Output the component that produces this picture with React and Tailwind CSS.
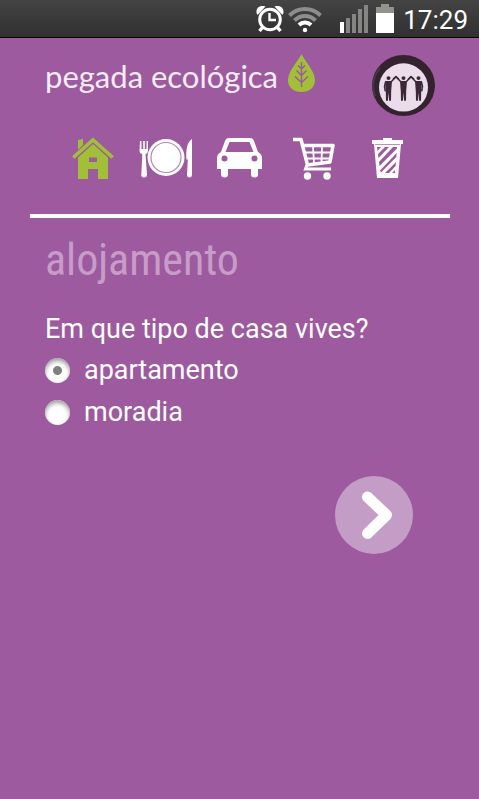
import { useState } from "react";

function StatusBar() {
  return (
    <div className="flex h-[38px] items-center justify-end border-b border-black bg-linear-to-b from-[#444444] to-[#303030] pr-[11px] text-white">
      <svg width="28" height="28" viewBox="0 0 28 28" fill="none" stroke="#fff" aria-label="alarme">
        <circle cx="14" cy="14.5" r="10.3" strokeWidth="3" />
        <path d="M13.5 8v7H20" strokeWidth="2.4" />
        <path d="M6.5 22.5 3.5 26M21.5 22.5l3 3.500" strokeWidth="3.4" />
        <path d="M1 9.500C-1 4 3 -.5 9.500 1.500L2 9.500zM27 9.500C29 4 25 -.5 18.500 1.500L26 9.500z" fill="#fff" stroke="none" />
      </svg>
      <svg className="ml-[4px]" width="34" height="28" viewBox="0 0 34 28" fill="none" aria-label="wifi">
        <path d="M1.500 10.500a21.500 21.500 0 0 1 31 0" stroke="#8d8e8c" strokeWidth="4" />
        <path d="M6.500 15.500a14.500 14.500 0 0 1 21 0" stroke="#8d8e8c" strokeWidth="4" />
        <path d="M11 20a8.500 8.500 0 0 1 12 0" stroke="#fff" strokeWidth="4" />
        <circle cx="17" cy="25" r="2.200" fill="#fff" />
      </svg>
      <svg className="ml-[18px]" width="28" height="28" viewBox="0 0 28 28" fill="#858683" aria-label="rede">
        <path fill="#fff" d="M0 17h4v11H0z" />
        <path d="M6 13h4v15H6zM12 9h4v19h-4zM18 4h4v24h-4zM24 0h4v28h-4z" />
      </svg>
      <svg className="ml-[8px]" width="18" height="29" viewBox="0 0 18 29" aria-label="bateria">
        <path fill="#92938f" d="M5 0h8v3h5v6H0V3h5z" />
        <path fill="#fff" d="M0 9h18v20H0z" />
      </svg>
      <span className="ml-[9px] pt-0.5 text-[26px] leading-[30px]">17:29</span>
    </div>
  );
}

function Leaf() {
  return (
    <svg width="27" height="38" viewBox="0 0 27 38" fill="none" aria-hidden="true">
      <path fill="#a2c037" d="M13.500 0C16 6 27 17 27 26c0 8-6 12-13.500 12S0 34 0 26C0 17 11 6 13.500 0z" />
      <path stroke="#9d5a9e" strokeWidth="1.500" d="M13.500 8v25M10 11.500l3.500 3.500 3.500-3.500M8.500 16.500l5 5 5-5M7 22.500l6.500 6 6.500-6" />
    </svg>
  );
}

function Person({ x, arms }) {
  return (
    <g transform={`translate(${x} 0)`} fill="#3b2836" stroke="#3b2836">
      <circle cx="0" cy="23.500" r="2" stroke="none" />
      <path stroke="none" d="M-3.500 26.500h7l-.8 10-.2 10H.6L0 38l-.6 8.500h-1.900L-2.700 37z" />
      <path d={arms} fill="none" strokeWidth="1.500" strokeLinejoin="round" />
    </g>
  );
}

function Badge() {
  return (
    <svg width="63" height="61" viewBox="0 0 63 62" preserveAspectRatio="none" aria-hidden="true">
      <ellipse cx="31.500" cy="31" rx="31.500" ry="31" fill="#35222f" />
      <path d="M3 42A31 30 0 0 1 8 13" fill="none" stroke="#433849" strokeWidth="2" />
      <circle cx="31.500" cy="33" r="24.500" fill="#eadcea" />
      <Person x={16.5} arms="M-3 27.500l-1 4.500.8 5M2.500 27.500l5-5.500 3 3" />
      <Person x={31.5} arms="M-2.500 27.500l-5-5.500-3 2.500M2.500 27.500l5-5.500 3 2.500" />
      <Person x={46.5} arms="M-2.500 27.500l-5-5.500-3 3M3 27.500l1 4.500-.8 5" />
    </svg>
  );
}

function HouseIcon() {
  return (
    <svg width="42" height="43" viewBox="0 0 42 43" aria-hidden="true">
      <path fill="#a2c037" d="M6 3l5-1v6l-5 5z" />
      <path fill="none" stroke="#a2c037" strokeWidth="3.600" d="M1.300 20.500 21 2.800l19.700 17.700" />
      <path fill="#a2c037" fillRule="evenodd" d="M21 7 36 20.500V42H26V32H16v10H6V20.500zM17 20.500V25h8v-4.500z" />
    </svg>
  );
}

function PlateIcon() {
  return (
    <svg width="54" height="42" viewBox="0 0 54 42" fill="#fff" aria-hidden="true">
      <path d="M1 4h1.500v8h1.700V4h1.600v8h1.700V4H9v10q0 2.500-2.500 3.200L8 38q-.3 2.500-3 2.500T2.300 38l1-20.800Q.5 16.500.5 14z" />
      <circle cx="27" cy="20.500" r="18.500" />
      <circle cx="27" cy="20.500" r="15" fill="none" stroke="#b584b6" strokeWidth="1.200" />
      <path d="M53 2v36q-.3 2.500-2.500 2.500T48 38l.8-15.500H47.500C46.500 12 48.500 5 53 2z" />
    </svg>
  );
}

function CarIcon() {
  return (
    <svg width="45" height="40" viewBox="0 0 45 40" aria-hidden="true">
      <path fill="#fff" fillRule="evenodd" d="M12 0h21q3 0 4 3l4 11q4 2 4 6v11h-4v5.500q0 3-3.500 3T34 36.500V31H11v5.500q0 3-3.500 3T4 36.500V31H0V20q0-4 4-6L8 3q1-3 4-3zM12.500 4 8.500 14h28l-4-10z" />
      <circle cx="7.500" cy="20.500" r="3" fill="#9d5a9e" />
      <circle cx="37.500" cy="20.500" r="3" fill="#9d5a9e" />
    </svg>
  );
}

function CartIcon() {
  return (
    <svg width="42" height="43" viewBox="0 0 42 43" fill="none" stroke="#fff" aria-hidden="true">
      <path strokeWidth="3.500" strokeLinejoin="round" d="M0 2.500h8L14.500 28 37 25l3-16.500H10" />
      <path strokeWidth="1.800" d="M20 9l1 18M29 9l-.5 17M11.500 15.500h27M13 21.500h25" />
      <path strokeWidth="3" d="M14 28l-1.500 4H38" />
      <circle cx="14.500" cy="39" r="3.700" fill="#fff" stroke="none" />
      <circle cx="34" cy="39" r="3.700" fill="#fff" stroke="none" />
    </svg>
  );
}

function TrashIcon() {
  return (
    <svg width="31" height="40" viewBox="0 0 31 40" aria-hidden="true">
      <path fill="#fff" d="M11 0h9v2h11v4h-2l-3 34H5L2 6H0V2h11z" />
      <path fill="#9d5a9e" d="M5 9h4l-3.500 4zM13 9h4L6.500 20l-.5-4zM21 9h4v1.500L7.500 28 7 24zM24.700 15l-.4 4L9 34.500l-1-2zM24 24l-.4 4L17 35h-4zM23 32v3h-3z" />
      <path stroke="#bc91bc" strokeWidth="1" d="M3 6.500h25" />
    </svg>
  );
}

const steps = [
  { label: "Alojamento", Icon: HouseIcon },
  { label: "Alimentação", Icon: PlateIcon },
  { label: "Transportes", Icon: CarIcon },
  { label: "Consumo", Icon: CartIcon },
  { label: "Resíduos", Icon: TrashIcon },
];

const options = ["apartamento", "moradia"];

export default function App() {
  const [choice, setChoice] = useState("apartamento");

  return (
    <div className="min-h-screen bg-[#9d5a9e] font-['Roboto',sans-serif] text-white">
      <StatusBar />
      <header className="pt-4 pr-[29px] pl-[30px]">
        <div className="flex items-start justify-between px-[15px]">
          <div className="flex items-start gap-2.5">
            <span className="pt-1 font-['Lato',sans-serif] text-[31px] leading-9 text-[#f6ecf6]">pegada ecológica</span>
            <Leaf />
          </div>
          <div className="pt-px">
            <Badge />
          </div>
        </div>
        <nav className="grid h-[82px] grid-cols-5 justify-items-center px-[26px] pt-[5px]">
          {steps.map(({ label, Icon }) => (
            <a key={label} href="#" aria-label={label} className="flex h-[74px] items-center">
              <Icon />
            </a>
          ))}
        </nav>
        <hr className="mt-4 border-0 border-t-4 border-white" />
      </header>
      <main className="px-[45px] pt-3">
        <h1 className="font-['Roboto_Condensed','Liberation_Sans_Narrow',sans-serif] text-[44px] leading-[60px] text-[#c79cc8]">alojamento</h1>
        <fieldset className="pt-[19px]">
          <legend className="float-left w-full text-[27px] leading-10">Em que tipo de casa vives?</legend>
          {options.map((option) => (
            <label key={option} className="flex h-[42px] w-full items-center gap-[14px] text-[27px] leading-[42px]">
              <input
                type="radio"
                name="casa"
                checked={choice === option}
                onChange={() => setChoice(option)}
                className="size-[25px] appearance-none rounded-full bg-white shadow-[inset_0_3px_4px_#a0a0a0] checked:bg-[radial-gradient(circle,#808080_4px,transparent_5px)]"
              />
              {option}
            </label>
          ))}
        </fieldset>
        <div className="flex justify-end pt-[43px] pr-[21px]">
          <button type="button" aria-label="Seguinte" className="flex size-[78px] items-center justify-center rounded-full bg-[#c49dc7]">
            <svg width="78" height="78" viewBox="0 0 78 78" fill="none" aria-hidden="true">
              <path stroke="#fff" strokeWidth="11" strokeLinecap="round" strokeLinejoin="round" d="M32.500 21l19 18-19 18.500" />
            </svg>
          </button>
        </div>
      </main>
    </div>
  );
}
